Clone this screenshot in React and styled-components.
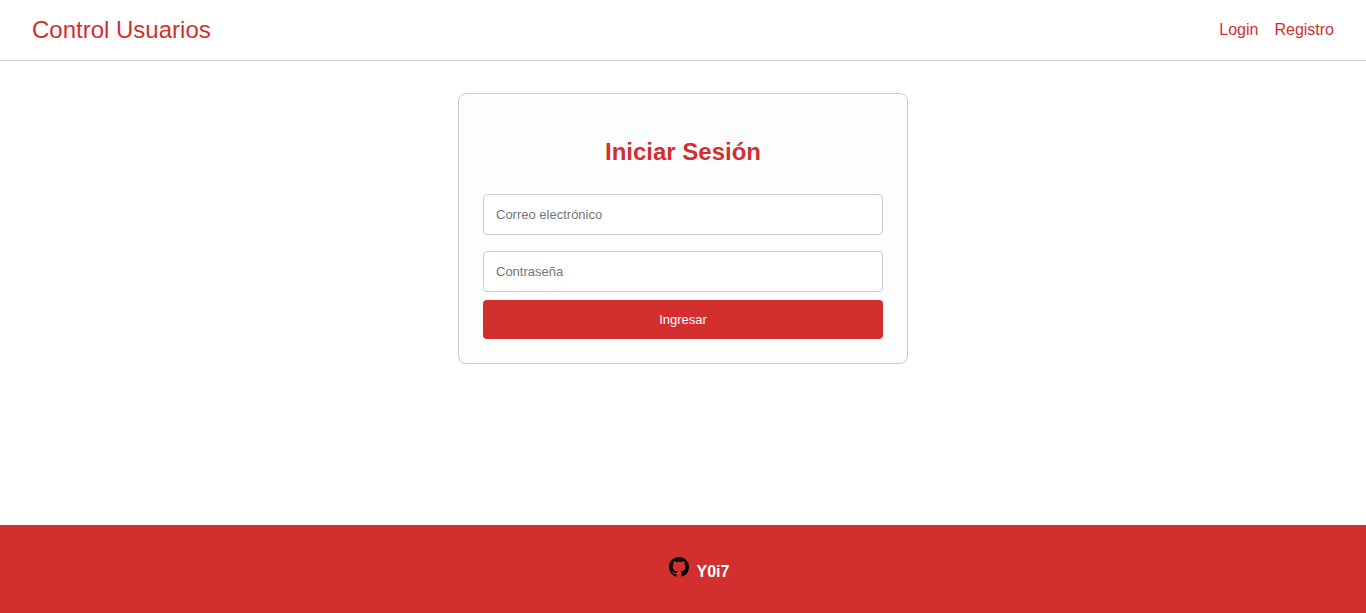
import React from "react";
import styled, { createGlobalStyle } from "styled-components";

const GlobalStyle = createGlobalStyle`
  * { box-sizing: border-box; }
  body {
    margin: 0;
    background: #fff;
    font-family: "Liberation Sans", Arial, sans-serif;
    font-size: 16px;
  }
`;

const Page = styled.div`
  display: flex;
  flex-direction: column;
  min-height: 100vh;
`;

const Header = styled.header`
  display: flex;
  align-items: center;
  justify-content: space-between;
  padding: 16px 32px;
  border-bottom: 1px solid #ccc;
`;

const NavLink = styled.a`
  color: #d32f2f;
  text-decoration: none;
  font-size: ${({ $brand }) => ($brand ? "24px" : "16px")};
  line-height: ${({ $brand }) => ($brand ? "28px" : "20px")};
`;

const Nav = styled.nav`
  display: flex;
  gap: 16px;
`;

const Main = styled.main`
  flex: 1;
  padding: 32px;
`;

const Card = styled.form`
  display: flex;
  flex-direction: column;
  max-width: 450px;
  margin: 0 auto;
  padding: 24px;
  background: #fdfdfd;
  border: 1px solid #ccc;
  border-radius: 8px;
`;

const Title = styled.h2`
  margin: 20px 0;
  color: #d32f2f;
  font-size: 24px;
  line-height: 28px;
  text-align: center;
`;

const Field = styled.input`
  width: 100%;
  margin: 8px 0;
  padding: 12px;
  border: 1px solid #ccc;
  border-radius: 4px;
  background: #fff;
  font-family: inherit;
  font-size: 13px;
  line-height: 15px;
`;

const SubmitButton = styled.button`
  padding: 12px;
  border: none;
  border-radius: 4px;
  background: #d32f2f;
  color: #fff;
  font-family: inherit;
  font-size: 13px;
  line-height: 15px;
  cursor: pointer;
`;

const Footer = styled.footer`
  display: flex;
  justify-content: center;
  padding: 32px;
  background: #d32f2f;
`;

const ProfileLink = styled.a`
  display: flex;
  align-items: flex-end;
  gap: 8px;
  height: 24px;
  margin-left: 32px;
  color: #fff;
  font-weight: bold;
  line-height: 18px;
  text-decoration: none;
`;

const GithubMark = styled.svg`
  width: 20px;
  height: 20px;
  align-self: flex-start;
  fill: #000;
`;

export default function App() {
  return (
    <Page>
      <GlobalStyle />
      <Header>
        <NavLink $brand href="#">Control Usuarios</NavLink>
        <Nav>
          <NavLink href="#login">Login</NavLink>
          <NavLink href="#registro">Registro</NavLink>
        </Nav>
      </Header>
      <Main>
        <Card onSubmit={(e) => e.preventDefault()}>
          <Title>Iniciar Sesión</Title>
          <Field type="email" placeholder="Correo electrónico" aria-label="Correo electrónico" />
          <Field type="password" placeholder="Contraseña" aria-label="Contraseña" />
          <SubmitButton type="submit">Ingresar</SubmitButton>
        </Card>
      </Main>
      <Footer>
        <ProfileLink href="#github">
          <GithubMark viewBox="0 0 16 16" aria-hidden="true">
            <path d="M8 0C3.58 0 0 3.58 0 8c0 3.54 2.29 6.53 5.47 7.59.4.07.55-.17.55-.38 0-.19-.01-.82-.01-1.49-2.01.37-2.53-.49-2.69-.94-.09-.23-.48-.94-.82-1.13-.28-.15-.68-.52-.01-.53.63-.01 1.08.58 1.23.82.72 1.21 1.87.87 2.33.66.07-.52.28-.87.51-1.07-1.78-.2-3.64-.89-3.64-3.95 0-.87.31-1.59.82-2.15-.08-.2-.36-1.02.08-2.12 0 0 .67-.21 2.2.82.64-.18 1.32-.27 2-.27s1.36.09 2 .27c1.53-1.04 2.2-.82 2.2-.82.44 1.1.16 1.92.08 2.12.51.56.82 1.27.82 2.15 0 3.07-1.87 3.75-3.65 3.95.29.25.54.73.54 1.48 0 1.07-.01 1.93-.01 2.2 0 .21.15.46.55.38A8.01 8.01 0 0 0 16 8c0-4.42-3.58-8-8-8z" />
          </GithubMark>
          Y0i7
        </ProfileLink>
      </Footer>
    </Page>
  );
}
